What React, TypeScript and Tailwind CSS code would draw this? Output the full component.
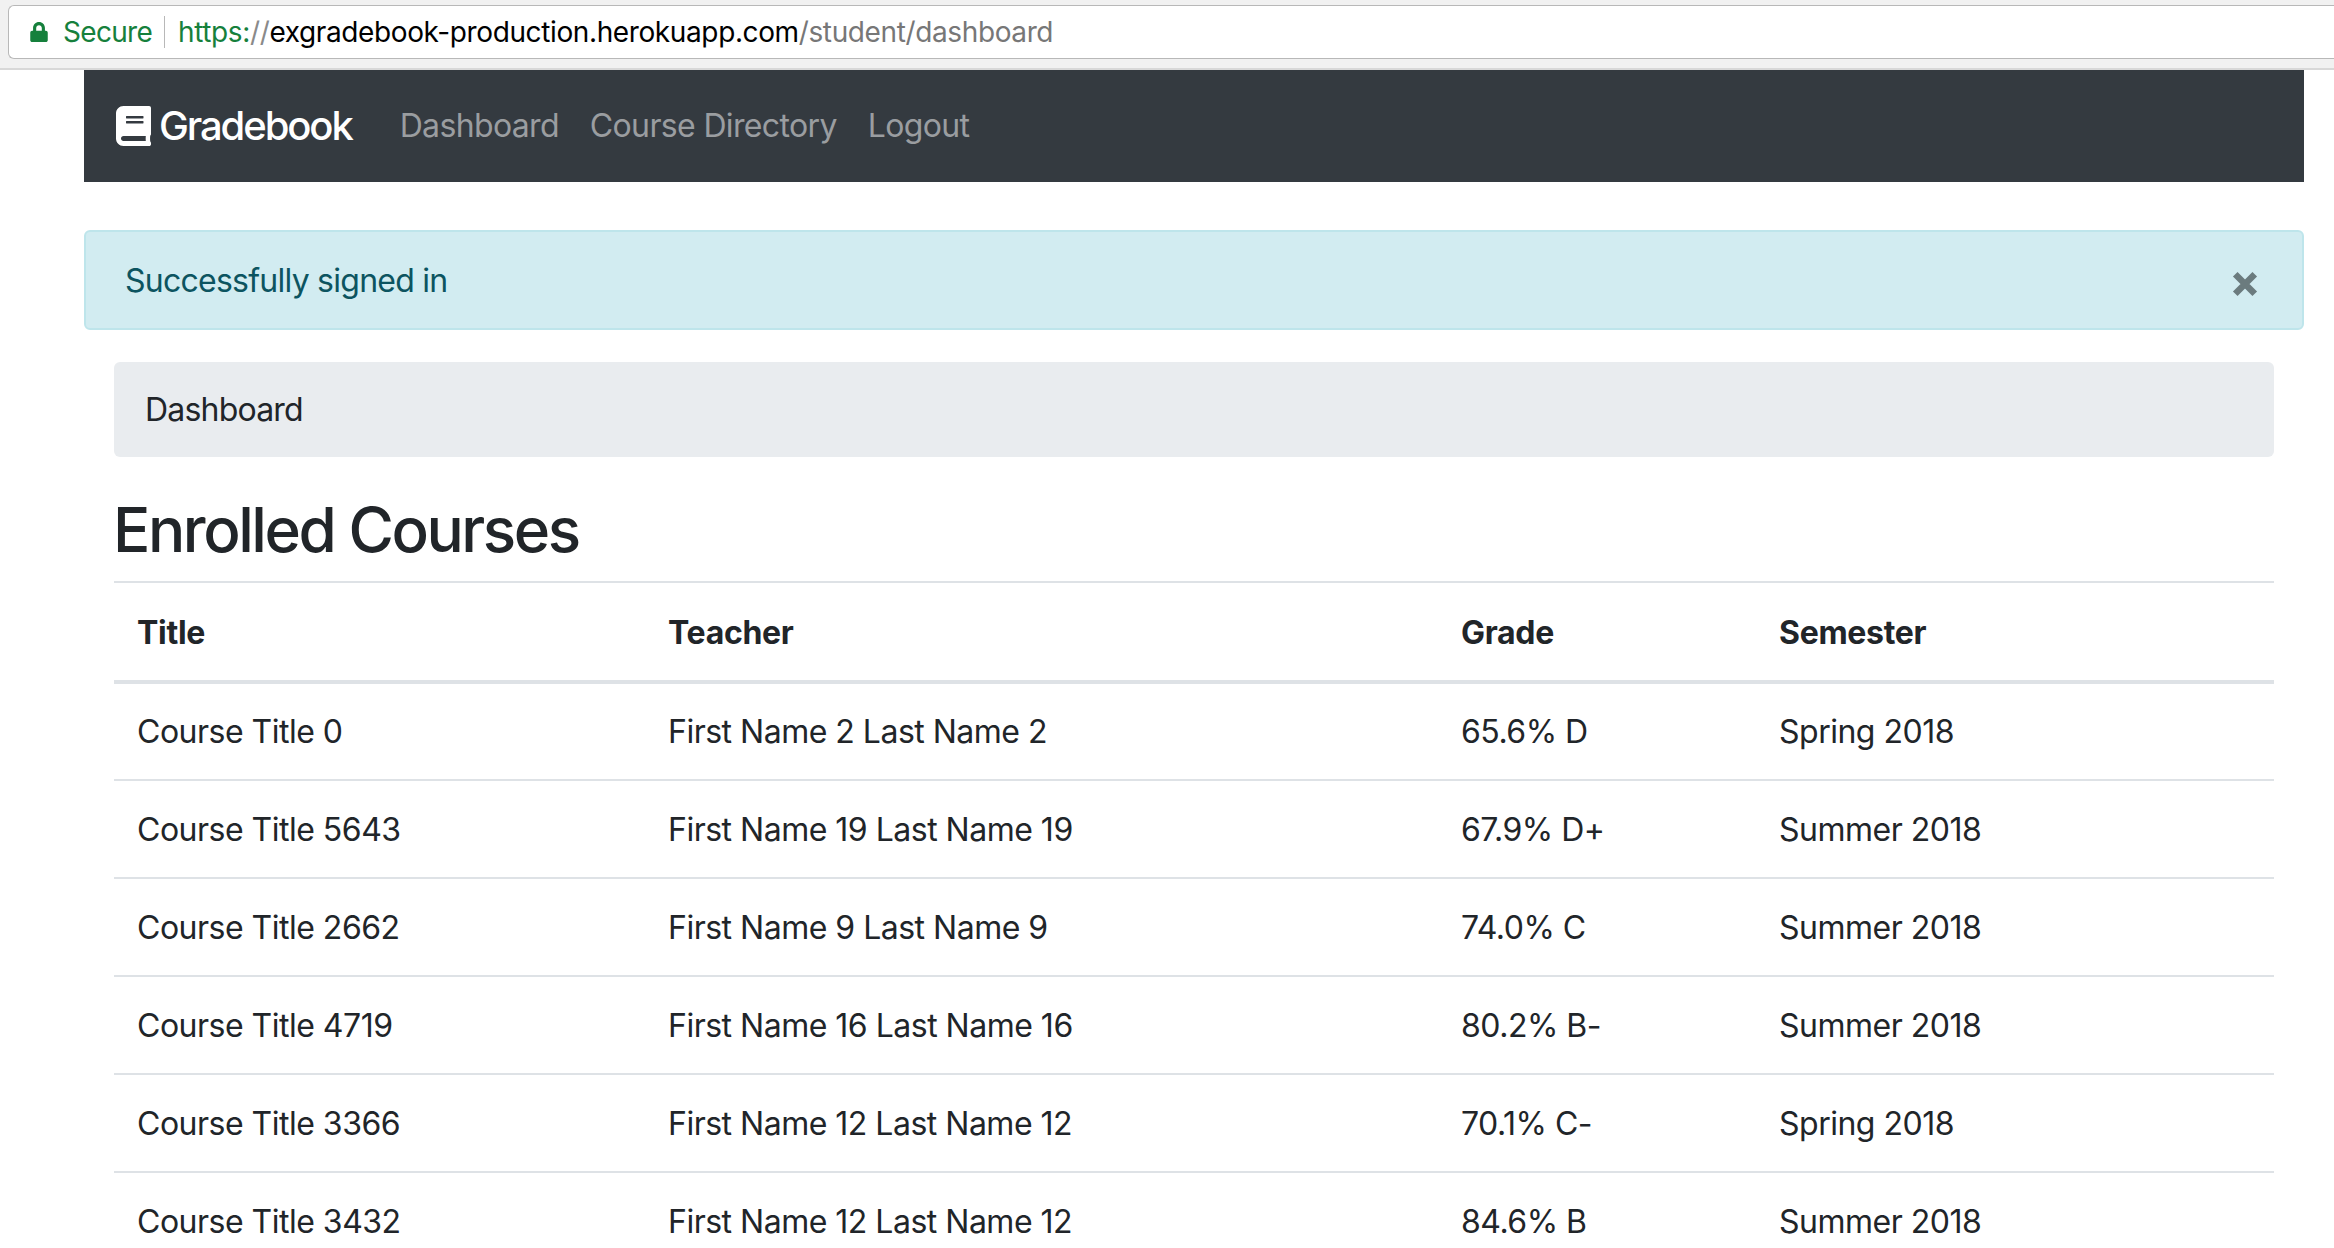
import { FaBook, FaLock } from "react-icons/fa";

const courses = [
  ["Course Title 0", "First Name 2 Last Name 2", "65.6% D", "Spring 2018"],
  ["Course Title 5643", "First Name 19 Last Name 19", "67.9% D+", "Summer 2018"],
  ["Course Title 2662", "First Name 9 Last Name 9", "74.0% C", "Summer 2018"],
  ["Course Title 4719", "First Name 16 Last Name 16", "80.2% B-", "Summer 2018"],
  ["Course Title 3366", "First Name 12 Last Name 12", "70.1% C-", "Spring 2018"],
  ["Course Title 3432", "First Name 12 Last Name 12", "84.6% B", "Summer 2018"],
];

export default function App() {
  return (
    <div className="h-screen overflow-hidden bg-white font-['Inter',sans-serif] text-[32px] text-[#212529]">
      {/* browser address bar */}
      <div className="h-[70px] border-b-2 border-[#d8d8d8] bg-[#f1f1f1] pl-[8px] pt-[5px]">
        <div className="flex h-[54px] items-center rounded-l-md border border-r-0 border-[#b8b8b8] bg-white pl-[21px] text-[28px] tracking-[-0.38px]">
          <FaLock className="h-[20px] w-[18px] text-[#16803c]" />
          <span className="ml-[15px] tracking-[-0.7px] text-[#16803c]">Secure</span>
          <span className="ml-[12px] h-[32px] w-px bg-[#b8b8b8]" />
          <span className="ml-[13px] text-[#16803c]">https:</span>
          <span className="text-[#8a8a8a]">//</span>
          <span className="text-black">exgradebook-production.herokuapp.com</span>
          <span className="text-[#777777]">/student/dashboard</span>
        </div>
      </div>

      <div className="pl-[84px] pr-[30px]">
        <nav className="flex h-[112px] items-center bg-[#343a40] pl-[32px]">
          <FaBook className="h-[40px] w-[35px] text-white" />
          <span className="ml-[8px] text-[40px] font-medium tracking-[-2.1px] text-white">Gradebook</span>
          <div className="ml-[48px] flex gap-[31px] tracking-[-0.65px] text-[#9a9da0]">
            <a>Dashboard</a>
            <a>Course Directory</a>
            <a>Logout</a>
          </div>
        </nav>

        <div className="mt-[48px] flex h-[100px] items-center justify-between rounded-md border-2 border-[#bee5eb] bg-[#d2ecf1] pl-[39px] pr-[44px] text-[#0c5460]">
          <span className="pt-[1px] tracking-[-0.75px]">Successfully signed in</span>
          <svg viewBox="0 0 24 24" className="mt-[8px] h-[26px] w-[26px] text-[#6b7b7e]">
            <path d="M3 3 L21 21 M21 3 L3 21" stroke="currentColor" strokeWidth="6" />
          </svg>
        </div>

        <div className="mx-[30px]">
          <div className="mt-[32px] flex h-[95px] items-center rounded-md bg-[#e9ecef] pl-[31px] pt-[1px] tracking-[-0.8px]">Dashboard</div>
          <h1 className="mt-[25px] -ml-[1px] text-[62px] font-medium leading-[96px] tracking-[-2.45px]">Enrolled Courses</h1>
          <table className="mt-[3px] w-full table-fixed border-collapse tracking-[-0.5px]">
            <colgroup>
              <col className="w-[532px]" />
              <col className="w-[792px]" />
              <col className="w-[318px]" />
              <col />
            </colgroup>
            <thead>
              <tr className="h-[100px] border-t-2 border-b-4 border-[#dee2e6] text-left tracking-[-0.3px]">
                <th className="pl-[23px] pt-[2px] font-bold">Title</th>
                <th className="pl-[22px] pt-[2px] font-bold">Teacher</th>
                <th className="pl-[23px] pt-[2px] font-bold">Grade</th>
                <th className="pl-[23px] pt-[2px] font-bold">Semester</th>
              </tr>
            </thead>
            <tbody>
              {courses.map((row, r) => (
                <tr key={r} className="h-[98px] border-b-2 border-[#dee2e6]">
                  <td className="pl-[23px] pt-[1px]">{row[0]}</td>
                  <td className="pl-[22px] pt-[1px]">{row[1]}</td>
                  <td className="pl-[23px] pt-[1px]">{row[2]}</td>
                  <td className="pl-[23px] pt-[1px]">{row[3]}</td>
                </tr>
              ))}
            </tbody>
          </table>
        </div>
      </div>
    </div>
  );
}
